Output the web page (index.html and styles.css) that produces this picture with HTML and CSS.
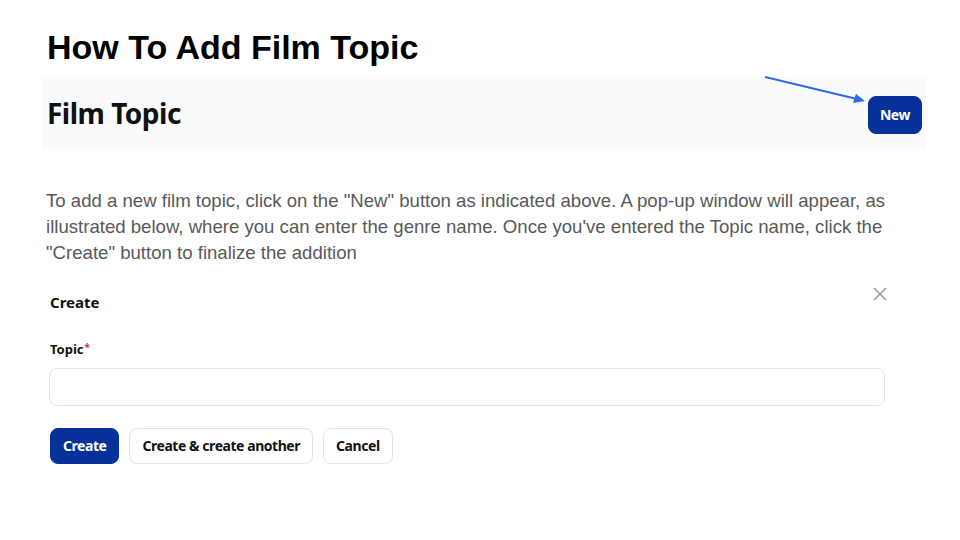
FILE: index.html
```html
<!DOCTYPE html>
<html>
<head>
<meta charset="utf-8">
<link rel="stylesheet" href="styles.css">
</head>
<body>
<div class="slide">
  <h1 class="title">How To Add Film Topic</h1>
  <div class="band">
    <h2 class="band-title">Film Topic</h2>
    <button class="btn btn-primary btn-new">New</button>
    <svg class="arrow" width="110" height="40" viewBox="0 0 110 40">
      <line x1="0" y1="2" x2="92" y2="24" stroke="#2b6de0" stroke-width="2"/>
      <polygon points="100,26 88,28 91,19" fill="#2b6de0"/>
    </svg>
  </div>
  <p class="desc">To add a new film topic, click on the "New" button as indicated above. A pop-up window will appear, as illustrated below, where you can enter the genre name. Once you've entered the Topic name, click the "Create" button to finalize the addition</p>
  <div class="modal">
    <div class="modal-head">
      <h3 class="modal-title">Create</h3>
      <svg class="close" width="16" height="16" viewBox="0 0 16 16"><path d="M2 2 L14 14 M14 2 L2 14" stroke="#8b8f97" stroke-width="1.4" fill="none"/></svg>
    </div>
    <label class="label">Topic<span class="req">*</span></label>
    <div class="input"></div>
    <div class="actions">
      <button class="btn btn-primary">Create</button>
      <button class="btn btn-outline">Create &amp; create another</button>
      <button class="btn btn-outline">Cancel</button>
    </div>
  </div>
</div>
</body>
</html>
```
FILE: styles.css
```css
html, body { margin: 0; padding: 0; background: #fff; }
.slide { width: 960px; height: 540px; position: relative; overflow: hidden; }
.title {
  font-family: "Liberation Sans", Arial, sans-serif;
  font-weight: bold; font-size: 34px; color: #000;
  margin: 0; padding: 29px 0 0 47px; line-height: 36px;
}
.band {
  position: relative;
  margin: 12px 34px 0 42px;
  height: 72px;
  background: #f9fafb;
  display: flex; align-items: center; justify-content: space-between;
  padding: 0 4px 0 5px;
}
.band-title {
  font-family: "Noto Sans", sans-serif; font-weight: 700;
  font-size: 28px; letter-spacing: -0.5px; color: #111;
  margin: 0; line-height: 1;
}
.btn {
  font-family: "Noto Sans", sans-serif; font-weight: 700; font-size: 14px;
  letter-spacing: -0.45px;
  border-radius: 8px; height: 36px; padding: 0 12px; cursor: pointer;
  line-height: 1;
}
.btn-primary { background: #06309a; color: #fff; border: 1px solid #06309a; }
.btn-outline { background: #fff; color: #111; border: 1px solid #e3e4e8; }
.btn-new { height: 38px; padding: 0 11px; margin-top: 4px; }
.arrow { position: absolute; left: 723px; top: -2px; }
.desc {
  font-family: "Liberation Sans", Arial, sans-serif; font-size: 18.6px;
  color: #595959; line-height: 26px;
  margin: 39px 36px 0 46px;
}
.modal { margin: 26px 75px 0 50px; font-family: "Noto Sans", sans-serif; }
.modal-head { display: flex; justify-content: space-between; align-items: flex-start; }
.modal-title { margin: 0; font-size: 15px; font-weight: 700; color: #111; line-height: 20px; }
.close { margin-top: -6px; margin-right: -3px; }
.label { display: block; margin-top: 28px; font-size: 13px; font-weight: 700; color: #111; }
.req { color: #e11d48; font-size: 10px; vertical-align: top; margin-left: 1px; }
.input {
  margin: 10px 0 0 -1px; height: 36px;
  border: 1px solid #e3e4e8; border-radius: 8px; background: #fff;
}
.actions { display: flex; gap: 10px; margin-top: 22px; }
```
